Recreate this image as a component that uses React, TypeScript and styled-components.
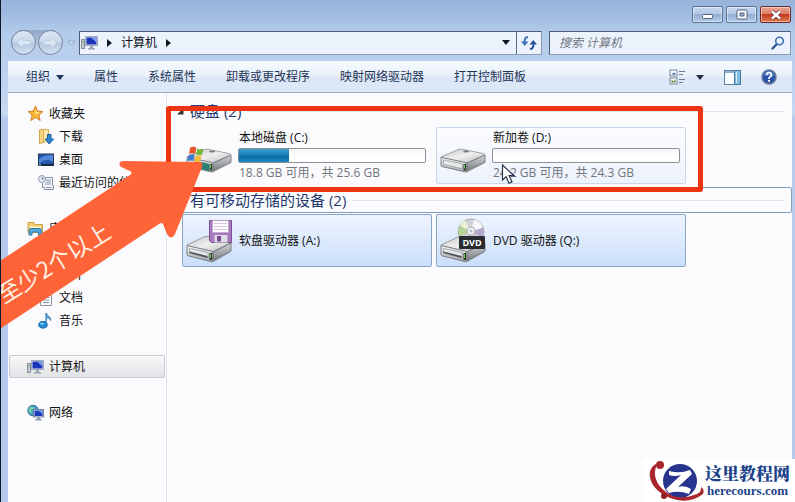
import React from 'react';
import styled, { createGlobalStyle } from 'styled-components';

const GlobalStyle = createGlobalStyle`
  * { box-sizing: border-box; }
  body {
    margin: 0;
    font-family: "Open Sans", "Noto Sans CJK SC", sans-serif;
    font-size: 12px;
    line-height: 16px;
    color: #111;
  }
  button, input { font: inherit; color: inherit; }
  button { border: 0; padding: 0; background: none; }
  svg { display: block; flex: none; }
`;

/* ---------- window frame ---------- */

const Frame = styled.div`
  position: relative;
  display: flex;
  flex-direction: column;
  min-height: 100vh;
  padding: 0 3px 0 7px;
  border-left: 1px solid #10182c;
  overflow: hidden;
  background: linear-gradient(#98b3d9 0, #a0bbe0 14px, #b2cbea 32px, #bad0ee 60px, #c6d8f2 114px, #b6cbee 118px, #b4c9ec 100%);
`;

const TitleBar = styled.header`
  display: flex;
  justify-content: flex-end;
  gap: 3px;
  padding: 6px 1px 7px 0;
`;

const CaptionButton = styled.button<{ $close?: boolean }>`
  display: grid;
  place-items: center;
  width: 31px;
  height: 17px;
  border: 1px solid ${p => (p.$close ? '#6b2b2b' : '#5e7596')};
  border-radius: 2px;
  box-shadow: inset 0 0 0 1px rgba(255, 255, 255, 0.45);
  background: ${p => (p.$close
    ? 'linear-gradient(#e9a796 0, #dd7a62 48%, #c43c20 50%, #dc7950 100%)'
    : 'linear-gradient(#c6d8ee 0, #b3c8e4 48%, #94aed3 50%, #b3cbea 100%)')};
`;

const NavBar = styled.div`
  display: flex;
  align-items: center;
  gap: 5px;
  padding: 0 1px 6px 3px;
`;

const History = styled.div`
  display: flex;
  align-items: center;
  gap: 4px;
  width: 63px;
`;

const HistoryPair = styled.div`
  display: flex;
  gap: 2px;
  border-radius: 12px;
  background: linear-gradient(#93a8c6, #b9cde8 70%);
`;

const RoundButton = styled.button`
  display: grid;
  place-items: center;
  width: 25px;
  height: 25px;
  border: 1px solid #77889f;
  border-radius: 50%;
  background: linear-gradient(#dce7f5 0, #c9d8eb 48%, #b3c6de 52%, #d3e2f4 100%);
`;

const AddressBox = styled.div`
  flex: 1;
  display: flex;
  align-items: stretch;
  height: 24px;
  border: 1px solid #8a9ab4;
  border-top-color: #4e5d75;
  border-left-color: #4e5d75;
  background: #edf3fd;
`;

const Crumbs = styled.div`
  flex: 1;
  display: flex;
  align-items: center;
  gap: 9px;
  padding-left: 1px;
`;

const Crumb = styled.button`
  color: #0b0f18;
`;

const BoxButton = styled.button<{ $divided?: boolean }>`
  display: grid;
  place-items: center;
  width: ${p => (p.$divided ? 25 : 20)}px;
  border-left: ${p => (p.$divided ? '1px solid #5d6b84' : '0')};
`;

const SearchBox = styled.label`
  display: flex;
  align-items: center;
  width: 242px;
  height: 24px;
  margin-left: 2px;
  padding: 0 5px 0 9px;
  border: 1px solid #8a9ab4;
  border-top-color: #4e5d75;
  border-left-color: #4e5d75;
  background: #edf3fd;
`;

const SearchInput = styled.input`
  flex: 1;
  min-width: 0;
  padding: 0;
  border: 0;
  outline: 0;
  background: none;
  &::placeholder { color: #6f7580; font-style: italic; opacity: 1; }
`;

const Toolbar = styled.div`
  display: flex;
  align-items: center;
  gap: 30px;
  height: 32px;
  padding: 0 15px 0 18px;
  border-top: 1px solid #f4f9ff;
  border-bottom: 1px solid #9eabbf;
  background: linear-gradient(#f7fbff 0, #e8f0fb 45%, #dbe6f6 55%, #dde8f8 100%);
  color: #1e3557;
`;

const ToolButton = styled.button`
  display: flex;
  align-items: center;
  gap: 6px;
  white-space: nowrap;
`;

const ToolIcons = styled.div`
  display: flex;
  align-items: center;
  gap: 20px;
  margin-left: auto;
`;

const ViewButton = styled(ToolButton)`
  gap: 10px;
`;

const Body = styled.div`
  flex: 1;
  display: grid;
  grid-template-columns: 159px minmax(0, 1fr);
  background: #fbfbfd;
`;

/* ---------- navigation pane ---------- */

const Side = styled.nav`
  display: flex;
  flex-direction: column;
  gap: 23px;
  padding: 9px 1px 0 1px;
  border-right: 1px solid #dbe5f2;
`;

const SideGroup = styled.div`
  display: flex;
  flex-direction: column;
`;

const SideLink = styled.a<{ $child?: boolean; $active?: boolean }>`
  display: flex;
  align-items: center;
  gap: 5px;
  height: 23px;
  padding-left: ${p => (p.$child ? 28 : 17)}px;
  border: 1px solid ${p => (p.$active ? '#c9cbd1' : 'transparent')};
  border-radius: 2px;
  background: ${p => (p.$active ? 'linear-gradient(#f8f8f9, #e2e3e6)' : 'none')};
  color: #111;
  text-decoration: none;
  white-space: nowrap;
`;

/* ---------- content pane ---------- */

const Main = styled.main`
  padding-top: 5px;
`;

const GroupHead = styled.h2<{ $focused?: boolean }>`
  display: flex;
  align-items: center;
  gap: 6px;
  height: 26px;
  margin: 0;
  padding: 0 7px 0 9px;
  border: 1px solid ${p => (p.$focused ? '#7fa0bd' : 'transparent')};
  border-radius: 2px;
  color: #22396f;
  font-size: 15px;
  font-weight: 400;
  line-height: 20px;
  white-space: nowrap;
  &::after {
    content: "";
    flex: 1;
    height: 1px;
    background: #e0e2ec;
  }
`;

const Tiles = styled.div`
  display: flex;
  flex-wrap: wrap;
  gap: 4px;
  padding: 3px 0 3px 15px;
`;

const DeviceTiles = styled(Tiles)`
  padding-top: 1px;
`;

const Tile = styled.button<{ $state?: 'hover' | 'selected' }>`
  display: flex;
  align-items: center;
  gap: 6px;
  width: 250px;
  padding: 0 5px 0 3px;
  border: 1px solid transparent;
  border-radius: 2px;
  text-align: left;
  ${p => p.$state === 'hover' && 'border-color: #c8d9ee; background: linear-gradient(#fbfcfe, #edf2fc);'}
  ${p => p.$state === 'selected' && 'border-color: #88a6c4; background: linear-gradient(#eef4fe, #cbdffb);'}
`;

const VolumeTile = styled(Tile)`
  height: 57px;
`;

const DeviceTile = styled(Tile)`
  height: 53px;
`;

const TileText = styled.span`
  flex: 1;
  display: flex;
  flex-direction: column;
  white-space: nowrap;
`;

const Capacity = styled.span`
  height: 15px;
  margin: 2px 0 2px -1px;
  border: 1px solid #8d9096;
  border-radius: 2px;
  background: linear-gradient(#f4f4f5, #ffffff 50%);
`;

const Used = styled.span`
  display: block;
  height: 100%;
  background: linear-gradient(#3c9fce 0, #2389bd 35%, #0e6da6 60%, #1e88c0 100%);
`;

const Muted = styled.span`
  color: #71757d;
`;

/* ---------- annotations laid over the window ---------- */

const RedOutline = styled.div`
  position: absolute;
  top: 106px;
  left: 165px;
  width: 537px;
  height: 86px;
  border: 5px solid #ee3310;
  border-radius: 3px;
  pointer-events: none;
`;

const ArrowNote = styled.div`
  position: absolute;
  top: 155px;
  left: -1px;
  pointer-events: none;
`;

const ArrowText = styled.span`
  position: absolute;
  top: 92px;
  left: -14px;
  width: 134px;
  color: #fff1e4;
  font-family: "Noto Sans CJK SC", sans-serif;
  font-size: 23px;
  font-weight: 400;
  line-height: 30px;
  text-align: center;
  white-space: nowrap;
  transform: rotate(-32deg);
`;

const Pointer = styled.div`
  position: absolute;
  top: 164px;
  left: 500px;
  pointer-events: none;
`;

const Watermark = styled.aside`
  position: absolute;
  right: 0;
  bottom: 0;
  display: flex;
  align-items: center;
  gap: 1px;
  padding: 0 5px 0 3px;
  background: #fff;
  color: #1b4289;
`;

const BrandText = styled.div`
  display: flex;
  flex-direction: column;
  align-items: center;
`;

const BrandName = styled.strong`
  font-family: "Noto Serif CJK SC", "Noto Sans CJK SC", serif;
  font-size: 17px;
  font-weight: 900;
  line-height: 20px;
`;

const BrandSite = styled.span`
  font-family: "Liberation Serif", serif;
  font-size: 13px;
  font-weight: 700;
  line-height: 16px;
`;

/* ---------- icons ---------- */

const Caret = ({ dir = 'down', color = '#101522' }: { dir?: 'down' | 'right'; color?: string }) => (
  dir === 'down'
    ? <svg width="8" height="5" viewBox="0 0 8 5"><path d="M0 0h8L4 5z" fill={color} /></svg>
    : <svg width="5" height="8" viewBox="0 0 5 8"><path d="M0 0l5 4-5 4z" fill={color} /></svg>
);

const ComputerIcon = () => (
  <svg width="17" height="16" viewBox="0 0 17 16">
    <rect x="0.5" y="4.5" width="3" height="9" fill="#c6ccd6" stroke="#858e9d" />
    <rect x="1.5" y="6" width="1" height="1.5" fill="#4b9b55" />
    <rect x="4.5" y="1.5" width="12" height="9" fill="#e4e8f0" stroke="#a3abbb" />
    <rect x="5.500" y="2.500" width="10" height="7" fill="#1b35b8" />
    <path d="M10 2.500h5.500v5z" fill="#7ba2ee" />
    <path d="M9 11h3v2h2v1.5H7V13h2z" fill="#9aa4b4" />
  </svg>
);

const StarIcon = () => (
  <svg width="17" height="17" viewBox="0 0 17 17">
    <path d="M8.5 1l2.1 5.1 5.4.4-4.1 3.6 1.3 5.4-4.7-3-4.7 3 1.4-5.4L1 6.5l5.4-.4z" fill="#f7b733" stroke="#cf7d27" strokeLinejoin="round" />
    <path d="M8.5 3.5l1.3 3.6 3.5.4-4.8 2.2z" fill="#ffe58a" />
  </svg>
);

const DownloadIcon = () => (
  <svg width="16" height="17" viewBox="0 0 16 17">
    <path d="M1.5 2l4-1v13.500l-4 1z" fill="#f5d37d" stroke="#d1a348" />
    <path d="M5.500 1.500h5V13l-5 1.500z" fill="#fbe7a8" stroke="#d6ae56" />
    <path d="M9.500 6.500h3.500v4.500h2.500L11.200 16 7 11h2.500z" fill="#2f86cf" stroke="#175a9c" />
  </svg>
);

const DesktopIcon = () => (
  <svg width="16" height="14" viewBox="0 0 16 14">
    <rect x="0.500" y="1" width="15" height="11.500" fill="#2457ae" stroke="#27364f" />
    <path d="M1 6c5-4 9-3 14-4.500V9C9 5.500 5 7 1 11z" fill="#5187d6" />
    <path d="M1 11h14v1.500H1z" fill="#1a2740" />
    <rect x="1" y="11" width="2" height="1.500" fill="#57b1a4" />
  </svg>
);

const RecentIcon = () => (
  <svg width="16" height="16" viewBox="0 0 16 16">
    <path d="M4.500 2.500h10v8h1v4H6.500v-2h-2z" fill="#f1f4f8" stroke="#8591a4" />
    <path d="M8 5h5M8 7h5M7 9h6M8 12.500h6" stroke="#8c9cb3" />
    <circle cx="4" cy="4" r="3.500" fill="#e7edf5" stroke="#8f9cad" />
    <path d="M4 2v2h2" fill="none" stroke="#66758b" />
  </svg>
);

const LibraryIcon = () => (
  <svg width="17" height="15" viewBox="0 0 17 15">
    <path d="M1 1.500h6l1 2h7.500v8H1z" fill="#f3cf73" stroke="#d0a147" />
    <path d="M3 5.500h11v5H3z" fill="#fff3c2" />
    <path d="M2 14V9.500q0-2 2-2h8.500q2 0 2 2V14h-3v-3H5v3z" fill="#57a9dc" stroke="#3279b0" />
  </svg>
);

const FileIcon = () => (
  <svg width="16" height="16" viewBox="0 0 16 16">
    <path d="M2.500 0.500h8l3 3v12h-11z" fill="#fbfcfd" stroke="#8b929d" />
    <path d="M5 5h6M5 7.500h6M5 10h6M5 12.500h6" stroke="#8190a5" />
  </svg>
);

const MusicIcon = () => (
  <svg width="16" height="17" viewBox="0 0 16 17">
    <path d="M8 12V1c1 3 5 3.500 4.500 7.500-.3-2-1.500-2.500-3-2.800" fill="#5aa9e8" stroke="#2b73b5" />
    <ellipse cx="5" cy="12.800" rx="4.200" ry="3.300" fill="#238bd0" stroke="#1767a8" />
    <ellipse cx="4" cy="11.700" rx="2" ry="1" fill="#84cdf4" />
  </svg>
);

const NetworkIcon = () => (
  <svg width="17" height="17" viewBox="0 0 17 17">
    <circle cx="6" cy="6.500" r="5.200" fill="#3d9ed3" stroke="#286a9b" />
    <path d="M2 4c3-3 5-1 6 0l-3 2-1 4C1 8 1 6 2 4z" fill="#72cda0" />
    <rect x="6.500" y="5.500" width="10" height="7.500" fill="#dce5f2" stroke="#7082a0" />
    <rect x="7.500" y="6.500" width="8" height="5.500" fill="#183bb9" />
    <path d="M11 6.500h4.500v3.500z" fill="#7099ea" />
    <path d="M10 13.500h3v1.500h1.500v1.500h-6V15H10z" fill="#8d9bb1" />
  </svg>
);

const DriveBody = () => (
  <g>
    <path d="M2 15L28 26 46 16 44 19 27 29 3 22z" fill="#000" opacity="0.12" />
    <path d="M1 11L18 3q2-1 4-.5L42 7q3 1 3 2L28 17q-2 1-4 .5L3 13z" fill="url(#driveTop)" stroke="#898d91" strokeWidth="0.8" />
    <path d="M1 11.500L25 17q2 .5 2 2v7q0 2-2 1.500L3 22q-2-.5-2-2z" fill="url(#driveFront)" stroke="#777b80" />
    <path d="M27 18L45 9v8L27 27z" fill="url(#driveSide)" stroke="#63676d" strokeWidth="0.8" />
    <path d="M3.500 14.500L22 18.500v5.500L3.500 19.500z" fill="#e7e9e9" stroke="#9da1a4" strokeWidth="0.8" />
    <rect x="23.500" y="19" width="2.500" height="7" fill="#263b2b" />
    <rect x="24" y="20" width="1" height="4" fill="#71d05b" />
    <ellipse cx="26" cy="5" rx="3" ry="1" fill="#75787b" />
  </g>
);

const DriveDefs = () => (
  <defs>
    <linearGradient id="driveTop" x1="0" y1="0" x2="1" y2="1">
      <stop offset="0" stopColor="#c2c4c6" /><stop offset="0.5" stopColor="#efefef" /><stop offset="1" stopColor="#b9bbbd" />
    </linearGradient>
    <linearGradient id="driveFront" x1="0" y1="0" x2="0" y2="1">
      <stop offset="0" stopColor="#f5f5f5" /><stop offset="1" stopColor="#a6a9ad" />
    </linearGradient>
    <linearGradient id="driveSide" x1="0" y1="0" x2="0" y2="1">
      <stop offset="0" stopColor="#d5d6d8" /><stop offset="1" stopColor="#777a7e" />
    </linearGradient>
  </defs>
);

type DriveKind = 'system' | 'plain' | 'floppy' | 'dvd';

const DriveIcon = ({ kind }: { kind: DriveKind }) => (
  <svg width="47" height="46" viewBox="0 0 47 46">
    <DriveDefs />
    <g transform={kind === 'system' || kind === 'plain' ? 'translate(0 14) scale(1 .9)' : 'translate(0 16)'}><DriveBody /></g>
    {kind === 'system' && (
      <g transform="translate(0 4)">
        <path d="M4 11c3-2 5-1 6.500 0L9 17c-2-1-4-1-6 0z" fill="#e4562a" />
        <path d="M11.500 11.500c2 1.200 4 1 6 0L16 17.500c-2 1-4 1-6 0z" fill="#74b63b" />
        <path d="M2.700 18c2-1 4-1 6 0l-1.500 6c-2-1-4-1-6 0z" fill="#3a7dce" />
        <path d="M9.700 18.500c2 1 4 1 6 0l-1.500 6c-2 1-4 1-6 0z" fill="#f2bd34" />
        <path d="M15 25l8 2v7l-8-2z" fill="#2b8075" />
      </g>
    )}
    {kind === 'floppy' && (
      <g>
        <path d="M23.500 2.500h22v22h-20l-2-2z" fill="#a779bd" stroke="#7b4d94" />
        <rect x="26.500" y="2.500" width="16" height="12" fill="#fbf9fc" stroke="#bd9fca" strokeWidth="0.6" />
        <path d="M28 5.500h13M28 8.500h13M28 11.500h13" stroke="#d5c8dc" />
        <rect x="28.500" y="17" width="13" height="7.500" fill="#e1dce5" />
        <rect x="31" y="18" width="4" height="5.500" fill="#784e90" />
        <path d="M3.500 33.500l18 4.500v2l-18-5z" fill="#4e5257" />
      </g>
    )}
    {kind === 'dvd' && (
      <g>
        <circle cx="31" cy="14" r="13" fill="#d0d3d5" stroke="#a3a7aa" />
        <path d="M31 14L20 7.500q-3 5-1 11z" fill="#b4d496" />
        <path d="M31 14L25 2.500q-3 1-5 5z" fill="#eef1d8" />
        <path d="M31 14L34 1.500q6 1 9 8z" fill="#f6f6f8" />
        <path d="M31 14L43 9.500q2 5 0 10z" fill="#b7a9cc" />
        <circle cx="31" cy="13" r="4" fill="#f1f3f5" stroke="#a8adb3" />
        <circle cx="31" cy="13" r="1.500" fill="#a7bfcb" />
        <path d="M3.500 33.500l18 4.500v2l-18-5z" fill="#4e5257" />
        <rect x="19" y="18" width="26" height="13" rx="1" fill="#292c2f" />
        <text x="32" y="28" textAnchor="middle" fill="#fff" fontFamily="Open Sans, sans-serif" fontSize="9" fontWeight="700">DVD</text>
      </g>
    )}
  </svg>
);

const HistoryArrow = ({ back }: { back?: boolean }) => (
  <svg width="15" height="13" viewBox="0 0 15 13">
    <path d={back ? 'M1 6.500L7 1v3.500h7v4H7V12z' : 'M14 6.500L8 1v3.500H1v4h7V12z'} fill="#dbe7f4" stroke="#c1d0e2" />
  </svg>
);

/* ---------- page ---------- */

const commands = ['属性', '系统属性', '卸载或更改程序', '映射网络驱动器', '打开控制面板'];

const places = [
  [
    { name: '收藏夹', icon: <StarIcon /> },
    { name: '下载', icon: <DownloadIcon />, child: true },
    { name: '桌面', icon: <DesktopIcon />, child: true },
    { name: '最近访问的位置', icon: <RecentIcon />, child: true },
  ],
  [
    { name: '库', icon: <LibraryIcon /> },
    { name: '视频', icon: <FileIcon />, child: true },
    { name: '图片', icon: <FileIcon />, child: true },
    { name: '文档', icon: <FileIcon />, child: true },
    { name: '音乐', icon: <MusicIcon />, child: true },
  ],
  [{ name: '计算机', icon: <ComputerIcon />, active: true }],
  [{ name: '网络', icon: <NetworkIcon /> }],
] as { name: string; icon: React.ReactNode; child?: boolean; active?: boolean }[][];

const volumes = [
  { name: '本地磁盘 (C:)', kind: 'system', used: 27, space: '18.8 GB 可用，共 25.6 GB' },
  { name: '新加卷 (D:)', kind: 'plain', used: 0, space: '24.2 GB 可用，共 24.3 GB', hover: true },
] as { name: string; kind: DriveKind; used: number; space: string; hover?: boolean }[];

const devices = [
  { name: '软盘驱动器 (A:)', kind: 'floppy' },
  { name: 'DVD 驱动器 (Q:)', kind: 'dvd' },
] as { name: string; kind: DriveKind }[];

export default function App() {
  return (
    <Frame>
      <GlobalStyle />
      <TitleBar>
        <CaptionButton aria-label="最小化">
          <svg width="13" height="12" viewBox="0 0 13 12"><rect x="1.500" y="5.500" width="10" height="4" rx="1" fill="#fff" stroke="#53627c" /></svg>
        </CaptionButton>
        <CaptionButton aria-label="最大化">
          <svg width="12" height="11" viewBox="0 0 12 11">
            <rect x="1" y="1" width="10" height="9" rx="1" fill="#fff" stroke="#53627c" />
            <rect x="4" y="4" width="4" height="3" fill="#9eb4d4" stroke="#53627c" />
          </svg>
        </CaptionButton>
        <CaptionButton $close aria-label="关闭">
          <svg width="12" height="10" viewBox="0 0 12 10">
            <path d="M2 1.500l8 7M10 1.500l-8 7" stroke="#694047" strokeWidth="4" />
            <path d="M2 1.500l8 7M10 1.500l-8 7" stroke="#fff" strokeWidth="2.400" />
          </svg>
        </CaptionButton>
      </TitleBar>

      <NavBar>
        <History>
          <HistoryPair>
            <RoundButton aria-label="后退"><HistoryArrow back /></RoundButton>
            <RoundButton aria-label="前进"><HistoryArrow /></RoundButton>
          </HistoryPair>
          <svg width="9" height="6" viewBox="0 0 9 6"><path d="M1 1h7L4.500 5z" fill="#d5e3f5" stroke="#8ea5c5" /></svg>
        </History>
        <AddressBox>
          <Crumbs>
            <ComputerIcon />
            <Caret dir="right" />
            <Crumb>计算机</Crumb>
            <Caret dir="right" />
          </Crumbs>
          <BoxButton aria-label="以前的位置"><Caret /></BoxButton>
          <BoxButton $divided aria-label="刷新">
            <svg width="16" height="14" viewBox="0 0 16 14">
              <path d="M7 1Q3.500 1 3.500 6v1" fill="none" stroke="#3b71bd" strokeWidth="2" />
              <path d="M0 5.500h7.500L3.700 10z" fill="#3b71bd" />
              <path d="M9 13q3.500 0 3.500-5V7" fill="none" stroke="#285495" strokeWidth="2" />
              <path d="M8.500 8.500H16L12.300 4z" fill="#285495" />
            </svg>
          </BoxButton>
        </AddressBox>
        <SearchBox>
          <SearchInput type="text" placeholder="搜索 计算机" aria-label="搜索 计算机" />
          <svg width="14" height="14" viewBox="0 0 14 14">
            <path d="M1.500 12.500L6 8" stroke="#2c568f" strokeWidth="2.400" strokeLinecap="round" />
            <circle cx="8.500" cy="5" r="3.800" fill="#e8f3ff" stroke="#3c70b0" strokeWidth="1.600" />
          </svg>
        </SearchBox>
      </NavBar>

      <Toolbar>
        <ToolButton>组织<Caret color="#1e3557" /></ToolButton>
        {commands.map(c => <ToolButton key={c}>{c}</ToolButton>)}
        <ToolIcons>
          <ViewButton aria-label="更改视图">
            <svg width="17" height="16" viewBox="0 0 17 16">
              <rect x="1" y="1" width="7" height="6" fill="#f7fafd" stroke="#77879d" />
              <rect x="1" y="9" width="7" height="6" fill="#f7fafd" stroke="#77879d" />
              <path d="M2.500 5.500L5 3.500l2 2z" fill="#285a9b" />
              <path d="M2.500 13.500v-3l2 2 2-2v3z" fill="#5b843c" />
              <path d="M10 2.500h6M10 5.500h4M10 10.500h6M10 13.500h4" stroke="#6c7a92" />
            </svg>
            <Caret color="#1e2a40" />
          </ViewButton>
          <ToolButton aria-label="显示预览窗格">
            <svg width="17" height="15" viewBox="0 0 17 15">
              <rect x="0.500" y="0.500" width="16" height="14" fill="#fafdff" stroke="#5f7f9e" />
              <path d="M1 2h10" stroke="#8fb1cf" strokeWidth="2" />
              <rect x="10.500" y="0.500" width="6" height="14" fill="#80bdde" stroke="#467d9f" />
              <path d="M12.500 2v11" stroke="#d3edfa" />
            </svg>
          </ToolButton>
          <ToolButton aria-label="获取帮助">
            <svg width="16" height="16" viewBox="0 0 16 16">
              <circle cx="8" cy="8" r="7" fill="#2851a8" stroke="#6c7c99" strokeWidth="1.500" />
              <path d="M2.500 7a5.500 5 0 0 1 11 0z" fill="#5078c6" />
              <path d="M5.700 6Q5.800 3.700 8 3.700T10.400 6Q10.400 7.200 9 8T8 10" fill="none" stroke="#fff" strokeWidth="1.800" />
              <rect x="7.100" y="11" width="1.900" height="1.800" fill="#fff" />
            </svg>
          </ToolButton>
        </ToolIcons>
      </Toolbar>

      <Body>
        <Side aria-label="导航">
          {places.map(group => (
            <SideGroup key={group[0].name}>
              {group.map(p => (
                <SideLink key={p.name} href="#" $child={p.child} $active={p.active}>{p.icon}{p.name}</SideLink>
              ))}
            </SideGroup>
          ))}
        </Side>

        <Main>
          <GroupHead>
            <svg width="7" height="7" viewBox="0 0 7 7"><path d="M6.500 0v6.500H0z" fill="#333" /></svg>
            硬盘 (2)
          </GroupHead>
          <Tiles>
            {volumes.map(v => (
              <VolumeTile key={v.name} $state={v.hover ? 'hover' : undefined}>
                <DriveIcon kind={v.kind} />
                <TileText>
                  <span>{v.name}</span>
                  <Capacity><Used style={{ width: `${v.used}%` }} /></Capacity>
                  <Muted>{v.space}</Muted>
                </TileText>
              </VolumeTile>
            ))}
          </Tiles>
          <GroupHead $focused>
            <svg width="7" height="7" viewBox="0 0 7 7"><path d="M6.500 0v6.500H0z" fill="#333" /></svg>
            有可移动存储的设备 (2)
          </GroupHead>
          <DeviceTiles>
            {devices.map(d => (
              <DeviceTile key={d.name} $state="selected">
                <DriveIcon kind={d.kind} />
                <TileText>{d.name}</TileText>
              </DeviceTile>
            ))}
          </DeviceTiles>
        </Main>
      </Body>

      <RedOutline />
      <ArrowNote>
        <svg width="210" height="180" viewBox="0 0 210 180">
          <path d="M0 106L130 20Q133 18 130 16L121 12Q117 7 123 6L199 7Q204 7 202 12L175 79Q171 86 167 79L163 69Q162 67 159 69L0 174z" fill="#ff6338" />
        </svg>
        <ArrowText>至少2个以上</ArrowText>
      </ArrowNote>
      <Pointer>
        <svg width="15" height="21" viewBox="0 0 15 21">
          <path d="M1.500 1v15l3.700-3.300 2.800 6.500 3-1.300-2.800-6.200H13z" fill="#fff" stroke="#27324c" strokeWidth="1.200" />
        </svg>
      </Pointer>

      <Watermark>
        <svg width="58" height="43" viewBox="0 0 58 43">
          <circle cx="34" cy="22" r="17" fill="#28358e" />
          <path d="M23 12q11 3 21-1l2 4-14 13q7-2 13 2l-2 5q-10-4-20-1l-3-4 15-14q-7 2-12 0z" fill="#fff" />
          <path d="M12 4C-2 9 1 31 27 40q17 5 30-5 2-5-2-7 1 6-7 8-10 4-21 1C10 29 5 15 12 4z" fill="#a8262c" />
          <circle cx="14" cy="6" r="4" fill="#a8262c" />
          <circle cx="18" cy="37" r="3" fill="#8d2028" />
        </svg>
        <BrandText>
          <BrandName>这里教程网</BrandName>
          <BrandSite>herecours.com</BrandSite>
        </BrandText>
      </Watermark>
    </Frame>
  );
}
